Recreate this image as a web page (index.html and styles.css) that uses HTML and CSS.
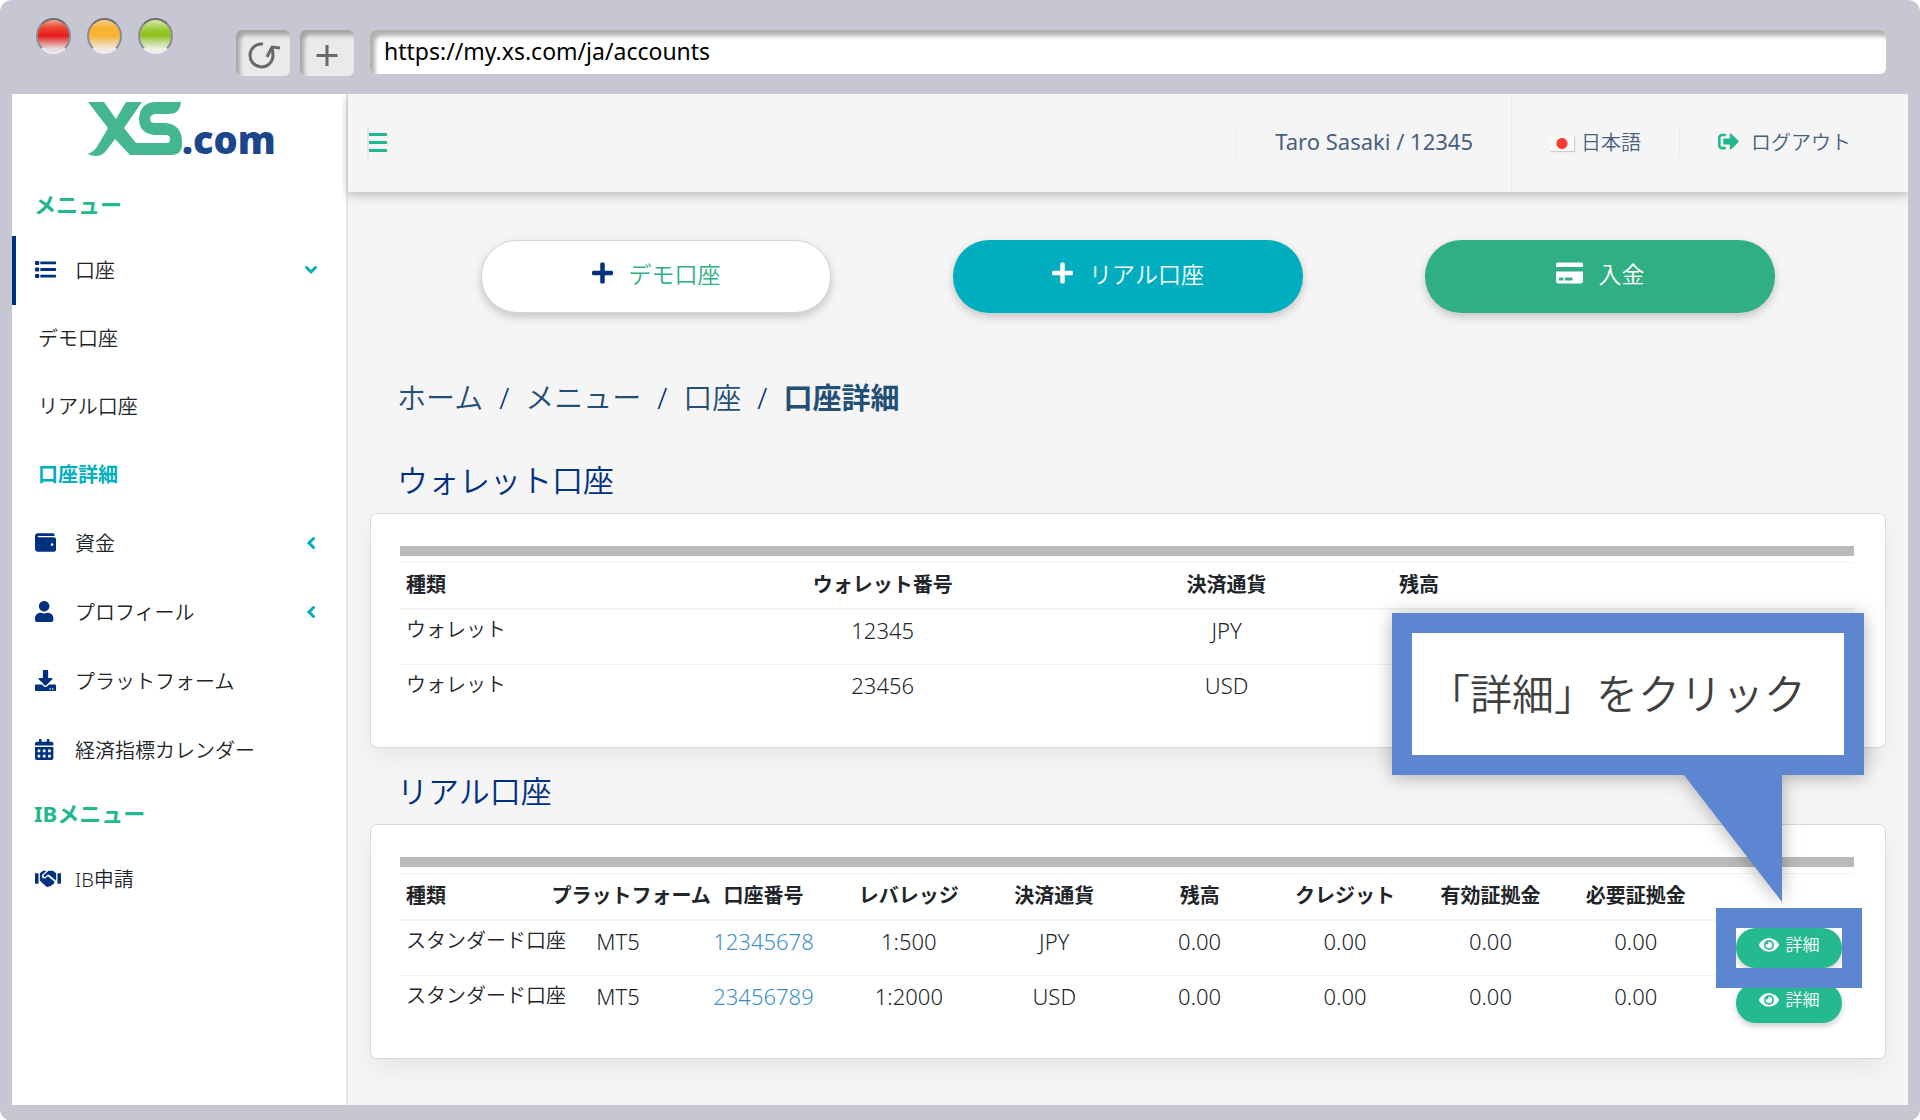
FILE: index.html
```
<!DOCTYPE html>
<html lang="ja">
<head>
<meta charset="utf-8">
<meta name="viewport" content="width=device-width, initial-scale=1">
<title>XS.com 口座詳細</title>
<link rel="stylesheet" href="styles.css">
</head>
<body>
<svg class="sprite" aria-hidden="true">
  <symbol id="i-list" viewBox="0 0 512 512"><path d="M24 48h56a24 24 0 0 1 24 24v48a24 24 0 0 1-24 24H24a24 24 0 0 1-24-24V72a24 24 0 0 1 24-24zm0 160h56a24 24 0 0 1 24 24v48a24 24 0 0 1-24 24H24a24 24 0 0 1-24-24v-48a24 24 0 0 1 24-24zm0 160h56a24 24 0 0 1 24 24v48a24 24 0 0 1-24 24H24a24 24 0 0 1-24-24v-48a24 24 0 0 1 24-24zM144 62h352a16 16 0 0 1 16 16v36a16 16 0 0 1-16 16H144a16 16 0 0 1-16-16V78a16 16 0 0 1 16-16zm0 160h352a16 16 0 0 1 16 16v36a16 16 0 0 1-16 16H144a16 16 0 0 1-16-16v-36a16 16 0 0 1 16-16zm0 160h352a16 16 0 0 1 16 16v36a16 16 0 0 1-16 16H144a16 16 0 0 1-16-16v-36a16 16 0 0 1 16-16z"/></symbol>
  <symbol id="i-wallet" viewBox="0 0 512 512"><path d="M461.2 128H80c-8.84 0-16-7.16-16-16s7.16-16 16-16h384c8.84 0 16-7.16 16-16 0-26.51-21.49-48-48-48H64C28.65 32 0 60.65 0 96v320c0 35.35 28.65 64 64 64h397.2c28.02 0 50.8-21.53 50.8-48V176c0-26.47-22.78-48-50.8-48zM416 336c-17.67 0-32-14.33-32-32s14.33-32 32-32 32 14.33 32 32-14.33 32-32 32z"/></symbol>
  <symbol id="i-user" viewBox="0 0 512 512"><path d="M224 256c70.7 0 128-57.3 128-128S294.7 0 224 0 96 57.3 96 128s57.3 128 128 128zm89.6 32h-16.7c-22.2 10.2-46.9 16-72.9 16s-50.6-5.8-72.9-16h-16.7C60.2 288 0 348.2 0 422.4V464c0 26.5 21.5 48 48 48h352c26.5 0 48-21.5 48-48v-41.6c0-74.2-60.2-134.4-134.4-134.4z"/></symbol>
  <symbol id="i-download" viewBox="0 0 512 512"><path d="M216 0h80c13.3 0 24 10.7 24 24v168h87.7c17.8 0 26.7 21.5 14.1 34.1L269.7 378.3c-7.5 7.5-19.8 7.5-27.3 0L90.1 226.1c-12.6-12.6-3.7-34.1 14.1-34.1H192V24c0-13.3 10.7-24 24-24zm296 376v112c0 13.3-10.7 24-24 24H24c-13.3 0-24-10.7-24-24V376c0-13.3 10.7-24 24-24h146.7l49 49c20.1 20.1 52.5 20.1 72.6 0l49-49H488c13.3 0 24 10.7 24 24zm-124 88c0-11-9-20-20-20s-20 9-20 20 9 20 20 20 20-9 20-20zm64 0c0-11-9-20-20-20s-20 9-20 20 9 20 20 20 20-9 20-20z"/></symbol>
  <symbol id="i-calendar" viewBox="0 0 512 512"><path fill-rule="evenodd" d="M0 464c0 26.500 21.500 48 48 48h352c26.500 0 48-21.500 48-48V192H0zM64 256h64v64H64zm128 0h64v64h-64zm128 0h64v64h-64zM64 384h64v64H64zm128 0h64v64h-64zm128 0h64v64h-64zM400 64h-48V16c0-8.800-7.200-16-16-16h-32c-8.800 0-16 7.200-16 16v48H160V16c0-8.800-7.200-16-16-16h-32c-8.800 0-16 7.200-16 16v48H48C21.500 64 0 85.500 0 112v48h448v-48c0-26.500-21.500-48-48-48z"/></symbol>
  <symbol id="i-handshake" viewBox="0 0 640 512"><path d="M0 128h72c9 0 16 7 16 16v224c0 9-7 16-16 16H24c-13 0-24-11-24-24zM640 128h-72c-9 0-16 7-16 16v224c0 9 7 16 16 16h48c13 0 24-11 24-24zM120 128l70-58c10-6 22-6 34-6h60l-98 92c-24 24-20 66 6 86 26 20 60 18 82-4l42-38 146 118c18 16 20 40 6 58l-22 26-30 8-24 34-40-4-20 20c-26 12-50 0-60-12l-80-72-72-72zM520 128l-72-58c-10-6-20-6-32-6h-66c-14 0-22 4-30 12l-104 96c-10 12-10 28 0 38 12 12 28 12 38 4l62-56 26 4 154 124c10 8 16 18 18 28l6-10z"/></symbol>
  <symbol id="i-plus" viewBox="0 0 448 512"><path d="M416 208H272V64c0-17.67-14.33-32-32-32h-32c-17.67 0-32 14.33-32 32v144H32c-17.67 0-32 14.33-32 32v32c0 17.67 14.33 32 32 32h144v144c0 17.67 14.33 32 32 32h32c17.67 0 32-14.33 32-32V304h144c17.67 0 32-14.33 32-32v-32c0-17.67-14.33-32-32-32z"/></symbol>
  <symbol id="i-card" viewBox="0 0 576 512"><path d="M0 432c0 26.500 21.500 48 48 48h480c26.500 0 48-21.500 48-48V226H0v206zm192-68c0-6.600 5.400-12 12-12h136c6.600 0 12 5.400 12 12v40c0 6.600-5.400 12-12 12H204c-6.600 0-12-5.400-12-12v-40zm-128 0c0-6.600 5.400-12 12-12h72c6.600 0 12 5.400 12 12v40c0 6.600-5.400 12-12 12H76c-6.600 0-12-5.400-12-12v-40zM576 64v64H0V64c0-18 14-32 32-32h512c18 0 32 14 32 32z"/></symbol>
  <symbol id="i-eye" viewBox="0 0 576 512"><path d="M572.52 241.4C518.29 135.59 410.93 64 288 64S57.68 135.64 3.48 241.41a32.35 32.35 0 0 0 0 29.19C57.71 376.41 165.07 448 288 448s230.32-71.64 284.52-177.41a32.35 32.35 0 0 0 0-29.19zM288 400a144 144 0 1 1 144-144 143.93 143.93 0 0 1-144 144zm0-240a95.31 95.31 0 0 0-25.31 3.79 47.85 47.85 0 0 1-66.900 66.900A95.780 95.780 0 1 0 288 160z"/></symbol>
  <symbol id="i-logout" viewBox="0 0 512 512"><path d="M497 273L329 441c-15 15-41 4.500-41-17v-96H152c-13.300 0-24-10.700-24-24v-96c0-13.300 10.700-24 24-24h136V88c0-21.400 25.900-32 41-17l168 168c9.300 9.400 9.300 24.600 0 34zM192 436v-40c0-6.600-5.400-12-12-12H96c-17.700 0-32-14.300-32-32V160c0-17.700 14.300-32 32-32h84c6.600 0 12-5.400 12-12V76c0-6.600-5.400-12-12-12H96c-53 0-96 43-96 96v192c0 53 43 96 96 96h84c6.600 0 12-5.400 12-12z"/></symbol>
  <symbol id="i-chevron" viewBox="0 0 14 14"><path d="M2.500 4.500 7 9l4.500-4.500" fill="none" stroke="currentColor" stroke-width="3" stroke-linecap="round"/></symbol>
</svg>

<div class="browser">
  <div class="chrome">
    <div class="lights"><span class="light red"></span><span class="light amber"></span><span class="light green"></span></div>
    <div class="tools">
      <button class="tool" type="button" aria-label="再読み込み"><svg viewBox="0 0 36 32" width="36" height="32"><path d="M18 5A11.500 11.500 0 1 0 28 17Q28 12 27 8M22 18 27 8l8 1" fill="none" stroke="#696969" stroke-width="3"/></svg></button>
      <button class="tool" type="button" aria-label="新しいタブ"><svg viewBox="0 0 32 32" width="32" height="32"><path d="M16 6v21M5.500 16.500h21" fill="none" stroke="#696969" stroke-width="3"/></svg></button>
    </div>
    <input class="url" type="text" aria-label="URL" value="https://my.xs.com/ja/accounts">
  </div>

  <div class="app">
    <aside class="sidebar">
      <a class="logo" href="#" aria-label="XS.com">
        <svg viewBox="0 0 94 54" width="94" height="54"><path fill="#45b78f" d="M0 0H16L28 17 38 0H54L36 26 48 41H79Q82 41 82 37Q82 33 78 33H66Q51 31 51 17Q52 0 68 0H93Q92 12 81 12H67Q62 13 62 17Q62 21 67 21H78Q93 23 94 38V42Q94 53 83 53H42L27 37 18 49Q14 54 8 54Q3 54 0 52Q7 49 10 43L20 26Z"/></svg>
        <span class="logo-text">.com</span>
      </a>
      <nav>
        <h2 class="menu-title">メニュー</h2>
        <a class="menu-item active" href="#"><svg class="icon"><use href="#i-list"/></svg>口座<svg class="chevron"><use href="#i-chevron"/></svg></a>
        <a class="sub-item" href="#">デモ口座</a>
        <a class="sub-item" href="#">リアル口座</a>
        <a class="sub-item current" href="#">口座詳細</a>
        <a class="menu-item" href="#"><svg class="icon"><use href="#i-wallet"/></svg>資金<svg class="chevron left"><use href="#i-chevron"/></svg></a>
        <a class="menu-item" href="#"><svg class="icon"><use href="#i-user"/></svg>プロフィール<svg class="chevron left"><use href="#i-chevron"/></svg></a>
        <a class="menu-item" href="#"><svg class="icon"><use href="#i-download"/></svg>プラットフォーム</a>
        <a class="menu-item" href="#"><svg class="icon"><use href="#i-calendar"/></svg>経済指標カレンダー</a>
        <h2 class="menu-title">IBメニュー</h2>
        <a class="menu-item" href="#"><svg class="icon wide"><use href="#i-handshake"/></svg>IB申請</a>
      </nav>
    </aside>

    <div class="page">
      <header class="topbar">
        <button class="burger" type="button" aria-label="メニュー"><span></span><span></span><span></span></button>
        <div class="top-item user">Taro Sasaki / 12345</div>
        <a class="top-item lang" href="#"><span class="flag"></span>日本語</a>
        <a class="top-item logout" href="#"><svg class="icon"><use href="#i-logout"/></svg>ログアウト</a>
      </header>

      <main class="content">
        <div class="actions">
          <button class="action demo" type="button"><svg width="21" height="24"><use href="#i-plus"/></svg>デモ口座</button>
          <button class="action real" type="button"><svg width="21" height="24"><use href="#i-plus"/></svg>リアル口座</button>
          <button class="action deposit" type="button"><svg width="27" height="24"><use href="#i-card"/></svg>入金</button>
        </div>

        <nav class="breadcrumb"><a href="#">ホーム</a><span>/</span><a href="#">メニュー</a><span>/</span><a href="#">口座</a><span>/</span><b>口座詳細</b></nav>

        <section>
          <h1 class="section-title">ウォレット口座</h1>
          <div class="card">
            <div class="bar"></div>
            <table class="wallets">
              <colgroup><col class="w-type"><col class="w-number"><col class="w-currency"><col></colgroup>
              <thead><tr><th>種類</th><th>ウォレット番号</th><th>決済通貨</th><th>残高</th></tr></thead>
              <tbody>
                <tr><td>ウォレット</td><td class="latin">12345</td><td class="latin">JPY</td><td></td></tr>
                <tr><td>ウォレット</td><td class="latin">23456</td><td class="latin">USD</td><td></td></tr>
              </tbody>
            </table>
          </div>
        </section>

        <section>
          <h1 class="section-title">リアル口座</h1>
          <div class="card">
            <div class="bar"></div>
            <table>
              <thead><tr><th>種類</th><th>プラットフォーム</th><th>口座番号</th><th>レバレッジ</th><th>決済通貨</th><th>残高</th><th>クレジット</th><th>有効証拠金</th><th>必要証拠金</th><th></th></tr></thead>
              <tbody>
                <tr><td>スタンダード口座</td><td class="latin">MT5</td><td class="latin"><a href="#">12345678</a></td><td class="latin">1:500</td><td class="latin">JPY</td><td class="latin">0.00</td><td class="latin">0.00</td><td class="latin">0.00</td><td class="latin">0.00</td>
                  <td class="detail-cell">
                    <div class="highlight">
                      <button class="detail" type="button"><svg width="20" height="18"><use href="#i-eye"/></svg>詳細</button>
                      <div class="callout">「詳細」をクリック<svg class="pointer" viewBox="0 0 98 127" width="98" height="127"><path d="M0 0H98V127Z"/></svg></div>
                    </div>
                  </td></tr>
                <tr><td>スタンダード口座</td><td class="latin">MT5</td><td class="latin"><a href="#">23456789</a></td><td class="latin">1:2000</td><td class="latin">USD</td><td class="latin">0.00</td><td class="latin">0.00</td><td class="latin">0.00</td><td class="latin">0.00</td>
                  <td class="detail-cell"><button class="detail" type="button"><svg width="20" height="18"><use href="#i-eye"/></svg>詳細</button></td></tr>
              </tbody>
            </table>
          </div>
        </section>
      </main>
    </div>
  </div>
</div>
</body>
</html>
```
FILE: styles.css
```
* { box-sizing: border-box; }

body {
  margin: 0;
  background: #fff;
  color: #212529;
  font-family: "Noto Sans", "Noto Sans CJK JP", sans-serif;
  font-size: 20px;
  font-weight: 350;
}

a { color: inherit; text-decoration: none; }
button { font: inherit; cursor: pointer; }
svg { fill: currentColor; flex: none; }
.sprite { display: none; }

/* Browser frame */
.browser {
  display: flex;
  flex-direction: column;
  min-height: 100vh;
  padding: 0 12px 16px;
  border-radius: 12px;
  background: #c7c6d3;
}

.chrome {
  display: flex;
  align-items: flex-start;
  height: 94px;
  padding: 18px 22px 0 24px;
}

.lights { display: flex; gap: 16px; }
.light {
  width: 35px;
  height: 36px;
  border: 2px solid;
  border-color: #6f6e72 #8d8c92 #eceaf0 #8d8c92;
  border-radius: 50%;
}
.red { background: linear-gradient(#f0a58f, #e8432f 25%, #e81c1c 50%, #e26a66 65%, #e8dcdc 90%); }
.amber { background: linear-gradient(#f5cf8c, #f8b332 25%, #f8b332 50%, #f0c880 65%, #efe9df 90%); }
.green { background: linear-gradient(#d5e8a8, #93c827 35%, #8fc31f 50%, #b8d67c 65%, #ecf1e2 90%); }

.tools { display: flex; gap: 10px; margin: 12px 16px 0 63px; }
.tool {
  display: grid;
  place-items: center;
  width: 54px;
  height: 46px;
  padding: 4px 0 0;
  border: 0;
  border-radius: 6px;
  background: #eaeaea;
  box-shadow: inset 4px 5px 4px #a3a3a3;
}
.url {
  flex: 1;
  min-width: 0;
  height: 44px;
  margin-top: 12px;
  padding: 0 14px 2px;
  border: 0;
  border-radius: 6px;
  background: #fff;
  box-shadow: inset 5px 6px 4px #b0b0b0;
  color: #000;
  font: 400 23px "Noto Sans", sans-serif;
}

.app { display: flex; flex: 1; background: #f5f5f5; }

/* Sidebar */
.sidebar {
  flex: none;
  width: 336px;
  border-right: 2px solid #e8e8e8;
  background: #fff;
}
.logo {
  display: flex;
  align-items: flex-end;
  height: 82px;
  padding: 0 0 20px 76px;
}
.logo-text {
  color: #1b468c;
  font: 800 38px/34px "Open Sans", sans-serif;
}
.menu-title {
  margin: 0;
  padding: 0 22px 4px;
  color: #22b88e;
  font-size: 22px;
  font-weight: 700;
  line-height: 56px;
}
.menu-item {
  display: flex;
  align-items: center;
  height: 69px;
  padding: 0 28px 2px 23px;
}
.menu-item.active { padding-left: 19px; border-left: 4px solid #00317f; }
.menu-item .icon { width: 21px; height: 21px; margin-right: 19px; color: #00317f; }
.menu-item .wide { width: 26px; margin-right: 14px; }
.chevron { width: 14px; height: 14px; margin-left: auto; color: #00aebc; }
.left { transform: rotate(90deg); }
.sub-item { display: block; padding-left: 26px; line-height: 68px; }
.current { color: #00aebc; font-weight: 700; }

/* Top bar */
.page { display: flex; flex: 1; flex-direction: column; min-width: 0; }
.topbar {
  display: flex;
  align-items: center;
  height: 98px;
  background: #f5f5f5;
  box-shadow: 0 3px 10px rgba(0, 0, 0, .25);
  clip-path: inset(0 0 -20px -6px);
  color: #48607f;
}
.burger {
  display: flex;
  flex-direction: column;
  justify-content: center;
  gap: 5px;
  height: 30px;
  margin: 0 auto 0 19px;
  padding: 0 0 2px;
  border: 0;
  border-left: 2px solid #e5e5e5;
  background: none;
}
.burger span { width: 18px; height: 3px; background: #22b88e; }
.top-item {
  display: flex;
  align-items: center;
  height: 30px;
  padding: 0 38px 4px;
  border-left: 1px solid #ececec;
}
.user { font-size: 22px; font-weight: 400; }
.lang { height: 98px; gap: 7px; }
.flag {
  width: 24px;
  height: 15px;
  margin-top: 5px;
  background: radial-gradient(circle, #f93a33 0 5px, #f8f8f8 6px);
  box-shadow: 1px 1px 1px #ccc;
}
.logout { gap: 12px; padding-right: 57px; }
.logout .icon { width: 21px; height: 21px; color: #22b88e; }

/* Content */
.content { padding: 48px 22px 46px; }
.actions {
  display: grid;
  grid-template-columns: repeat(3, 1fr);
  gap: 122px;
  padding: 0 111px;
}
.action {
  display: flex;
  align-items: center;
  justify-content: center;
  gap: 16px;
  height: 73px;
  padding: 0 0 8px;
  border: 0;
  border-radius: 36px;
  box-shadow: 0 4px 10px rgba(0, 0, 0, .2);
  color: #fff;
  font-size: 23px;
}
.demo { border: 1px solid #d3d5de; background: #fff; color: #30af84; }
.demo svg { color: #00317f; }
.real { background: #00aebf; }
.deposit { background: #30af84; }

.breadcrumb {
  display: flex;
  gap: 16px;
  margin-top: 63px;
  padding-left: 27px;
  color: #234f75;
  font-size: 29px;
  line-height: 44px;
}
.breadcrumb span { color: #00317f; }
.breadcrumb b { font-weight: 700; }

.section-title {
  margin: 0;
  padding: 21px 27px 11px;
  color: #00317f;
  font-size: 31px;
  font-weight: 350;
  line-height: 44px;
}
.breadcrumb + section { margin-top: 17px; }
.card {
  padding: 32px 31px 27px 29px;
  border: 1px solid #d6d9df;
  border-radius: 7px;
  background: #fff;
  box-shadow: 0 10px 24px rgba(0, 0, 0, .06);
}
.bar { height: 10px; margin-bottom: 6px; background: #bababa; }

table {
  width: 100%;
  border-spacing: 0;
  border-top: 1px solid #f3f3f3;
  table-layout: fixed;
}
.w-type { width: 21%; }
.w-number { width: 24.4%; }
.w-currency { width: 22.9%; }
th, td {
  padding: 0 6px;
  text-align: center;
  vertical-align: top;
  white-space: nowrap;
  line-height: 30px;
}
th { height: 47px; padding-top: 7px; border-bottom: 2px solid #f3f3f3; font-weight: 700; }
td { height: 55px; padding-top: 5px; border-bottom: 1px solid #f3f3f3; }
tr:last-child td { border-bottom: 0; }
th:first-child, td:first-child, .wallets th:last-child { text-align: left; }
.latin { font-size: 22px; }
td a { color: #3d8fc6; }

.detail-cell { padding: 7px 12px 0; }
.detail {
  display: flex;
  align-items: center;
  justify-content: center;
  gap: 7px;
  width: 106px;
  height: 40px;
  margin: 0 0 0 auto;
  padding: 0 0 6px;
  border: 0;
  border-radius: 20px;
  background: #25b98f;
  box-shadow: 0 3px 6px rgba(0, 0, 0, .2);
  color: #fff;
  font-size: 17px;
}

/* Guide marks over the page */
.highlight { position: relative; z-index: 1; width: 106px; margin: 0 0 0 auto; }
.highlight::after {
  content: "";
  position: absolute;
  inset: -20px;
  border: 20px solid #5c86d0;
  pointer-events: none;
}
.callout {
  position: absolute;
  right: -22px;
  bottom: 193px;
  width: 472px;
  padding-right: 22px;
  border: 20px solid #5c86d0;
  background: #fff;
  color: #404040;
  filter: drop-shadow(0 2px 9px rgba(0, 0, 0, .3));
  font-size: 42px;
  line-height: 122px;
  text-align: center;
}
.pointer { position: absolute; top: 142px; right: 62px; fill: #5c86d0; }
```
